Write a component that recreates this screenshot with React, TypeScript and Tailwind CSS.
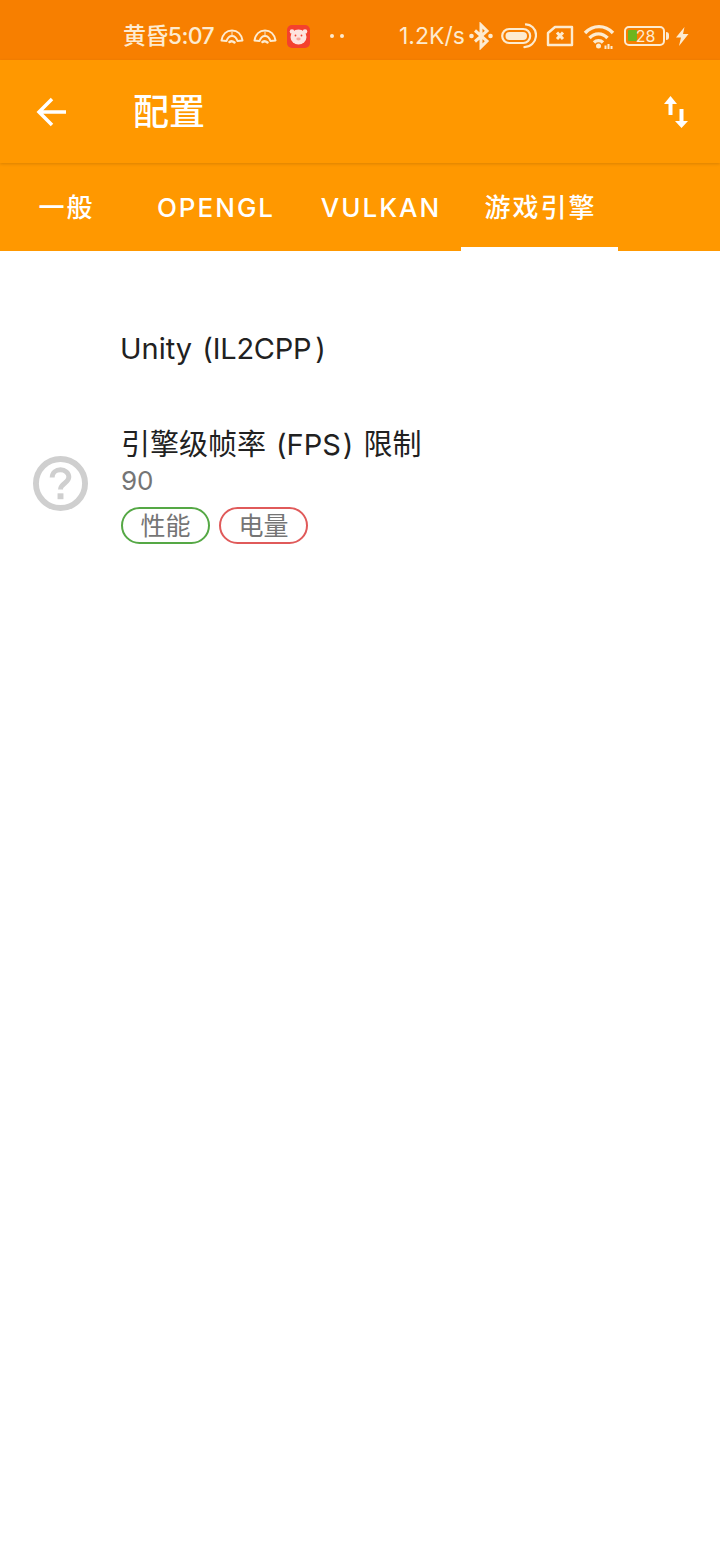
const ui = { fontFamily: 'Inter, "Noto Sans CJK SC", sans-serif' };

function Arc({ className }: { className: string }) {
  return (
    <svg className={className} width="24" height="15" viewBox="0 0 24 15" fill="none" stroke="#fdebd0" strokeWidth="2" strokeLinejoin="round">
      <path d="M1.500 11.500C2.500 5.500 6.500 1.500 12 1.500s9.500 4 10.500 10l-5 .5C16.500 9 14.500 7 12 7s-4.500 2-5.500 5z" />
      <path d="M12 2.500v3.500" strokeWidth="1" />
      <path d="M9.500 13c1-.8 3-1.200 5 .5" strokeWidth="2.400" strokeLinecap="round" />
    </svg>
  );
}

function StatusBar() {
  return (
    <div className="h-[60px] bg-[#f77f00] flex items-center pt-[12px] text-[#fdebd0]">
      <div className="ml-[123px] text-[23px] leading-none font-medium w-[95px] whitespace-nowrap tracking-[-0.6px]" style={ui}>黄昏5:07</div>
      <Arc className="ml-[2px]" />
      <Arc className="ml-[9px]" />
      <div className="ml-[10px] w-[23px] h-[23px] rounded-[5px] bg-[#f4412e] flex items-center justify-center">
        <svg width="19" height="17" viewBox="0 0 19 17" fill="#fde4df">
          <circle cx="3" cy="3.500" r="2.300" />
          <circle cx="16" cy="3.500" r="2.300" />
          <ellipse cx="9.500" cy="9" rx="8" ry="7.500" />
          <circle cx="6.500" cy="7.500" r="0.900" fill="#f4412e" />
          <circle cx="12.500" cy="7.500" r="0.900" fill="#f4412e" />
          <ellipse cx="9.500" cy="11" rx="2.200" ry="1.400" fill="#f7a79b" />
        </svg>
      </div>
      <div className="ml-[20px] flex gap-[6px]">
        <span className="w-[4px] h-[4px] rounded-full bg-[#fdebd0]" />
        <span className="w-[4px] h-[4px] rounded-full bg-[#fdebd0]" />
      </div>
      <div className="ml-[55px] text-[23px] leading-none whitespace-nowrap w-[68px]" style={ui}>1.2K/s</div>
      <svg className="ml-[2px]" width="24" height="28" viewBox="0 0 24 28" fill="none" stroke="#fdebd0" strokeWidth="3">
        <path d="M6 8.500 18 19 12 25V3L18 9 6 19.500" />
        <circle cx="2.500" cy="14" r="2.300" fill="#fdebd0" stroke="none" />
        <circle cx="21.500" cy="14" r="2.300" fill="#fdebd0" stroke="none" />
      </svg>
      <svg className="ml-[8px]" width="36" height="26" viewBox="0 0 36 26" fill="none" stroke="#fdebd0" strokeWidth="2.200">
        <rect x="1.200" y="6" width="28" height="14" rx="7" />
        <rect x="4.500" y="9" width="21.500" height="8" rx="4" fill="#fdebd0" stroke="none" />
        <path d="M24 1.500c6-.5 11 4.500 11 10.500 0 7.500-6 12.500-12.500 12" />
      </svg>
      <svg className="ml-[9px]" width="28" height="22" viewBox="0 0 28 22" fill="none" stroke="#fdebd0" strokeWidth="2.400">
        <path d="M9 2h17v18H2V8z" strokeLinejoin="round" />
        <path d="M11 7.500l6 6.500M17 7.500l-6 6.500" strokeWidth="3" />
      </svg>
      <svg className="ml-[9px]" width="32" height="25" viewBox="0 0 32 25" fill="none" stroke="#fdebd0" strokeWidth="3.400">
        <path d="M2 9c8-8.500 20-8.500 28 0" />
        <path d="M6.500 14c5-5.500 13-5.500 18 0" />
        <path d="M11 18.500c2.500-2.500 6.500-2.500 9 0" />
        <circle cx="15.500" cy="22" r="2.500" fill="#fdebd0" stroke="none" />
        <path d="M22.500 25v-3.500M25.500 25v-5M28.500 25v-3" strokeWidth="2" />
      </svg>
      <div className="ml-[9px] w-[41px] h-[20px] rounded-[5px] border-[2.500px] border-[#fdebd0] relative flex items-center justify-center">
        <div className="absolute left-[2px] top-[2px] w-[9px] h-[11px] bg-[#6fb51f] rounded-[1px]" />
        <span className="relative text-[16px] leading-none text-[#fdebd0] ml-[2px]" style={ui}>28</span>
      </div>
      <div className="ml-[1px] w-[3px] h-[8px] bg-[#fdebd0] rounded-r-sm" />
      <svg className="ml-[6px]" width="14" height="19" viewBox="0 0 14 19" fill="#fdebd0">
        <path d="M9.500 0 1 10.500h5L4 19l9.500-12H8z" />
      </svg>
    </div>
  );
}

function AppBar() {
  return (
    <div className="h-[103px] bg-[#ff9800] flex items-center relative shadow-[0_1px_3px_rgba(0,0,0,0.15)] z-10">
      <svg className="ml-[36px]" width="31" height="30" viewBox="0 0 31 30" fill="none" stroke="white" strokeWidth="3.500">
        <path d="M30 15H4M16 2 3 15 16 28" />
      </svg>
      <div className="ml-[66px] text-[36px] leading-none font-medium text-white" style={ui}>配置</div>
      <svg className="ml-auto mr-[32px]" width="24" height="32" viewBox="0 0 24 32" fill="white">
        <path d="M6.500 0 13 8H8.500V19H4.500V8H0z" />
        <path d="M17.500 32 11 25H15.500V13H19.500V25H24z" />
      </svg>
    </div>
  );
}

function Tabs() {
  const tabs = [
    { label: '一般', w: 'w-[131px]' },
    { label: 'OPENGL', w: 'w-[168px]' },
    { label: 'VULKAN', w: 'w-[162px]' },
    { label: '游戏引擎', w: 'w-[157px]', active: true },
  ];
  return (
    <div className="h-[88px] bg-[#ff9800] flex" style={ui}>
      {tabs.map((t) => (
        <div
          key={t.label}
          className={`${t.w} h-full flex items-center justify-center text-white text-[26px] font-medium tracking-[2px] pl-[2px] pt-[4px] border-b-[4px] ${t.active ? 'border-white' : 'border-transparent'}`}
        >
          {t.label}
        </div>
      ))}
    </div>
  );
}

function Chip({ label, border }: { label: string; border: string }) {
  return (
    <div className={`w-[89px] h-[37px] rounded-full border-2 ${border} flex items-center justify-center text-[25px] leading-none pt-[2px] text-[#757575]`}>
      {label}
    </div>
  );
}

export default function App() {
  return (
    <div className="w-[720px] h-[1560px] bg-white overflow-hidden" style={ui}>
      <StatusBar />
      <AppBar />
      <Tabs />
      <div className="pt-[74px] pl-[120px] text-[29px] leading-[48px] text-[#212121] whitespace-nowrap">
        Unity <span className="ml-[2px]">(</span><span className="tracking-[-0.3px]">IL2CPP</span><span className="ml-[4px]">)</span>
      </div>
      <div className="mt-[51px] flex">
        <div className="w-[121px] pl-[33px] pt-[32px]">
          <svg width="55" height="55" viewBox="0 0 56 56" fill="none">
            <circle cx="28" cy="28" r="25" stroke="#cfcfcf" strokeWidth="6" />
            <path d="M19.500 22c0-5 4-8 8.500-8s8.500 3 8.500 7.500c0 6-8.500 6.500-8.500 12.500" stroke="#cfcfcf" strokeWidth="5" />
            <rect x="25" y="38" width="6" height="6" fill="#cfcfcf" />
          </svg>
        </div>
        <div>
          <div className="text-[29px] leading-[42px] text-[#212121] whitespace-nowrap">
            引擎级帧率<span className="ml-[10px]">(</span>FPS<span className="ml-[2px]">)</span><span className="ml-[10px]">限制</span>
          </div>
          <div className="text-[26px] leading-[34px] text-[#757575] mt-[-2px]">90</div>
          <div className="flex gap-[9px] mt-[9px]">
            <Chip label="性能" border="border-[#55a845]" />
            <Chip label="电量" border="border-[#e05a5a]" />
          </div>
        </div>
      </div>
    </div>
  );
}
